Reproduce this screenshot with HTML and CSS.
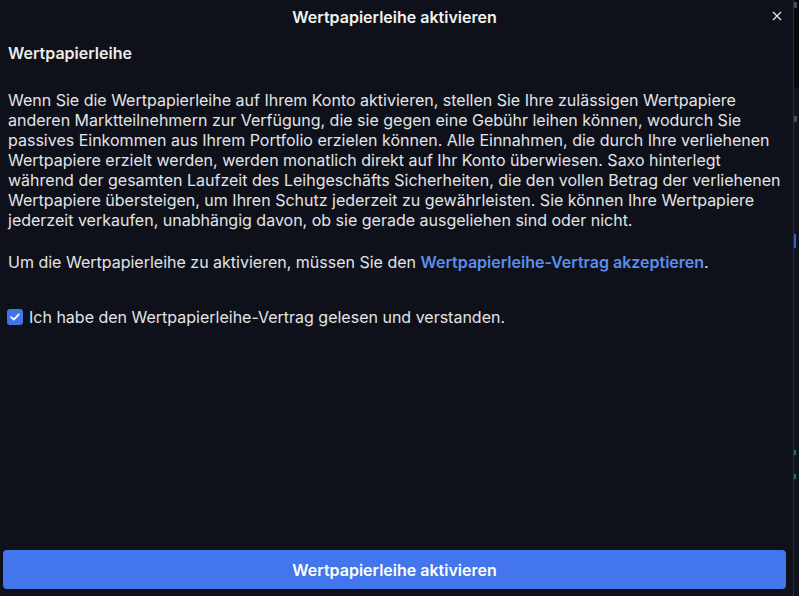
FILE: index.html
```html
<!DOCTYPE html>
<html lang="de">
  <head>
    <meta charset="utf-8">
    <title>Wertpapierleihe aktivieren</title>
    <link rel="stylesheet" href="styles.css">
  </head>
  <body>

    <!-- Dialog -->
    <div class="dialog">
      <div class="dialog-header">
        <span class="dialog-title">Wertpapierleihe aktivieren</span>
        <button class="close-btn" aria-label="Schließen">
          <svg width="10" height="10" viewBox="0 0 10 10">
            <path d="M1 1L9 9M9 1L1 9" stroke="#e6e6e6" stroke-width="1.3" fill="none"/>
          </svg>
        </button>
      </div>

      <div class="dialog-body">
        <h2 class="section-title">Wertpapierleihe</h2>

        <p>Wenn Sie die Wertpapierleihe auf Ihrem Konto aktivieren, stellen Sie Ihre zulässigen Wertpapiere anderen Marktteilnehmern zur Verfügung, die sie gegen eine Gebühr leihen können, wodurch Sie passives Einkommen aus Ihrem Portfolio erzielen können. Alle Einnahmen, die durch Ihre verliehenen Wertpapiere erzielt werden, werden monatlich direkt auf Ihr Konto überwiesen. Saxo hinterlegt während der gesamten Laufzeit des Leihgeschäfts Sicherheiten, die den vollen Betrag der verliehenen Wertpapiere übersteigen, um Ihren Schutz jederzeit zu gewährleisten. Sie können Ihre Wertpapiere jederzeit verkaufen, unabhängig davon, ob sie gerade ausgeliehen sind oder nicht.</p>

        <p>Um die Wertpapierleihe zu aktivieren, müssen Sie den <a href="#" class="link">Wertpapierleihe-Vertrag akzeptieren</a>.</p>

        <label class="agree">
          <span class="checkbox">
            <svg width="10" height="8" viewBox="0 0 10 8">
              <path d="M1.2 4.2L3.8 6.6L8.8 1.4" stroke="#fff" stroke-width="1.8" fill="none" stroke-linecap="round" stroke-linejoin="round"/>
            </svg>
          </span>
          Ich habe den Wertpapierleihe-Vertrag gelesen und verstanden.
        </label>
      </div>

      <div class="dialog-footer">
        <button class="primary-btn">Wertpapierleihe aktivieren</button>
      </div>
    </div>

    <!-- Background app, partly visible on the right -->
    <div class="backdrop">
      <span class="band"></span>
      <span class="mark top"></span>
      <span class="mark mid"></span>
      <span class="line"></span>
      <span class="mark green g1"></span>
      <span class="mark green g2"></span>
    </div>

  </body>
</html>
```

FILE: styles.css
```css
html, body {
  margin: 0;
  height: 100%;
}

body {
  background-color: #10131b;
  font-family: Inter, "Noto Sans", sans-serif;
  color: #e3e4e6;
  overflow: hidden;
  display: flex;
}

/* Dialog */
.dialog {
  flex: none;
  width: 794px;
  height: 596px;
  background-color: #0e111a;
  border-right: 1px solid #2a2f3a;
  display: flex;
  flex-direction: column;
  box-sizing: border-box;
}

.dialog-header {
  position: relative;
  height: 34px;
  display: flex;
  align-items: center;
  justify-content: center;
}

.dialog-title {
  font-size: 16px;
  font-weight: 600;
  color: #f2f2f2;
  margin-right: 4px;
}

.close-btn {
  position: absolute;
  right: 10px;
  top: 10px;
  width: 12px;
  height: 12px;
  padding: 0;
  border: none;
  background: none;
  display: flex;
  align-items: center;
  justify-content: center;
  cursor: pointer;
}

.dialog-body {
  flex: 1;
  padding: 8px 6px 0 8px;
}

.section-title {
  font-size: 16px;
  font-weight: 600;
  margin: 1px 0 27px 0;
  color: #ececec;
  line-height: 20px;
}

.dialog-body p {
  font-size: 16px;
  line-height: 20px;
  margin: 0 0 22px 0;
}

.link {
  color: #5a8eef;
  font-weight: 600;
  text-decoration: none;
}

.agree {
  display: flex;
  align-items: center;
  gap: 6px;
  font-size: 16px;
  line-height: 20px;
  margin-top: 35px;
  margin-left: -1px;
}

.checkbox {
  width: 16px;
  height: 16px;
  border-radius: 3px;
  background-color: #4274e6;
  display: flex;
  align-items: center;
  justify-content: center;
}

/* Footer */
.dialog-footer {
  padding: 0 7px 7px 3px;
}

.primary-btn {
  width: 100%;
  height: 39px;
  background-color: #4375ec;
  border: none;
  border-radius: 4px;
  color: #ffffff;
  font-family: Inter, "Noto Sans", sans-serif;
  font-size: 16px;
  font-weight: 600;
  cursor: pointer;
}

/* Background strip */
.backdrop {
  position: relative;
  flex: 1;
}

.backdrop .band {
  position: absolute;
  top: 0;
  left: 0;
  width: 100%;
  height: 88px;
  background-color: #05070a;
}

.backdrop .mark {
  position: absolute;
  left: 0;
  width: 3px;
  height: 6px;
  background-color: #444a55;
}

.backdrop .top {
  top: 2px;
}

.backdrop .mid {
  top: 116px;
}

.backdrop .green {
  width: 2px;
  height: 5px;
  background-color: #1f7a3a;
}

.backdrop .g1 {
  top: 450px;
}

.backdrop .g2 {
  top: 474px;
}

.backdrop .line {
  position: absolute;
  left: 0;
  top: 234px;
  width: 2px;
  height: 14px;
  background-color: #2f5fc7;
}
```
